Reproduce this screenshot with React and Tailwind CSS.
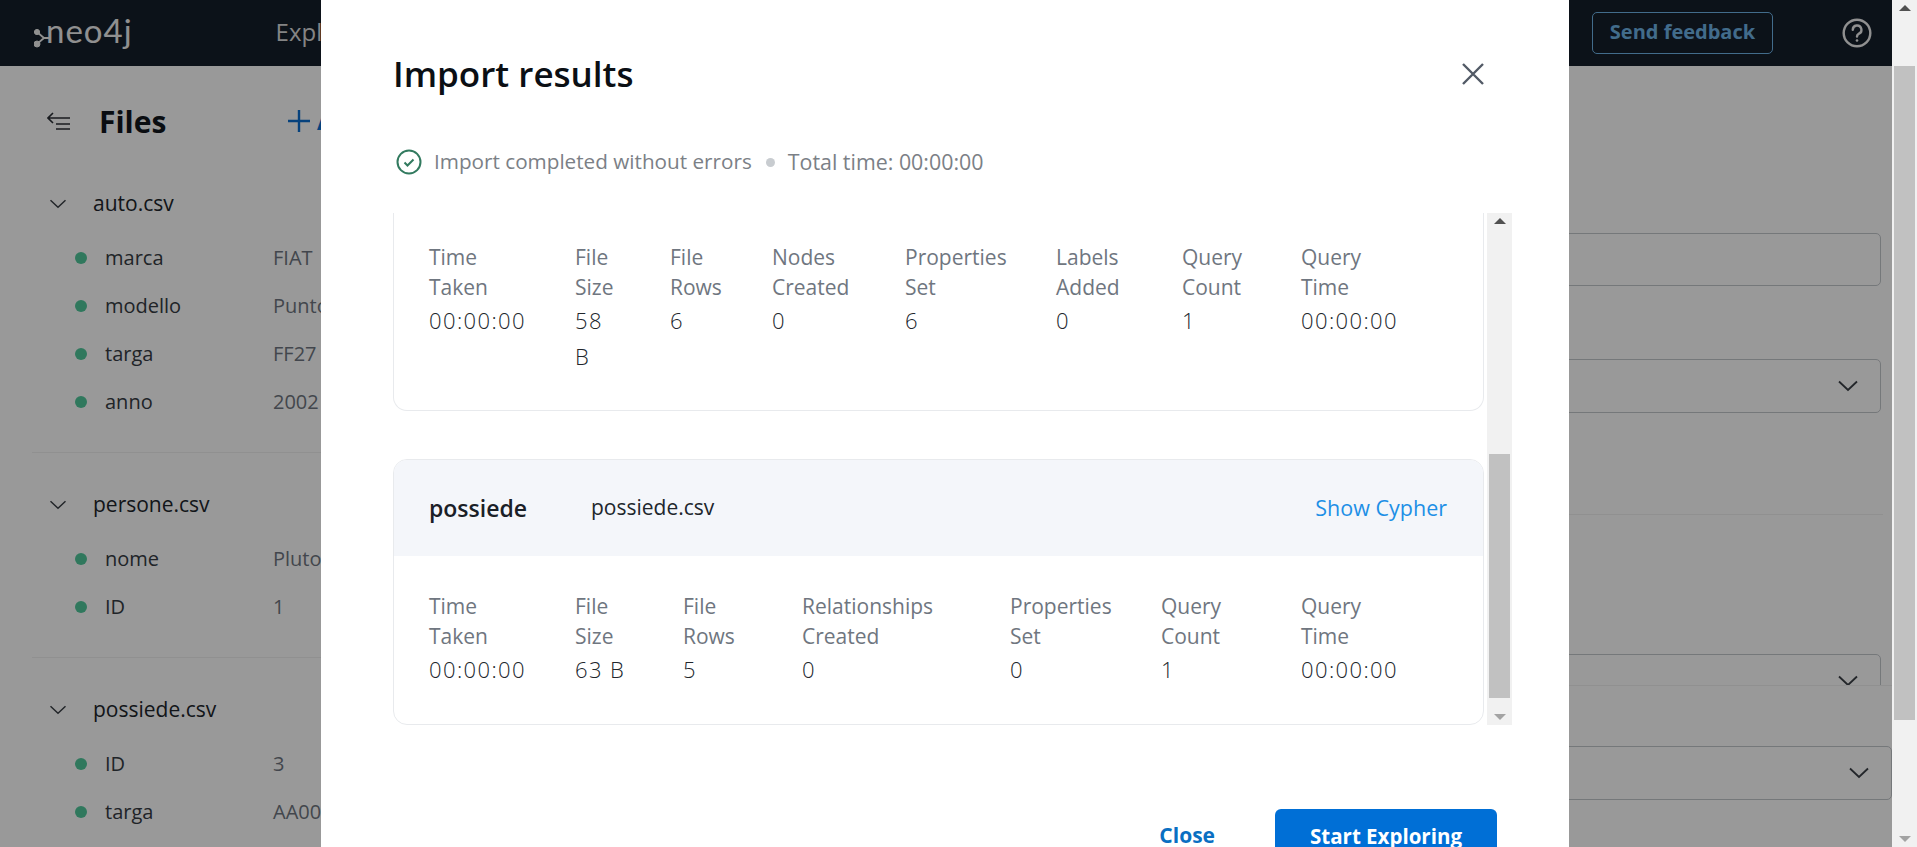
const font = { fontFamily: '"Open Sans", "Noto Sans", sans-serif' };

const groups = [
  {
    file: 'auto.csv',
    rows: [['marca', 'FIAT'], ['modello', 'Punto'], ['targa', 'FF27'], ['anno', '2002']],
  },
  { file: 'persone.csv', rows: [['nome', 'Pluto'], ['ID', '1']] },
  { file: 'possiede.csv', rows: [['ID', '3'], ['targa', 'AA00']], last: true },
];

const nodeStats = [
  ['Time', 'Taken', '00:00:00'],
  ['File', 'Size', '58\nB'],
  ['File', 'Rows', '6'],
  ['Nodes', 'Created', '0'],
  ['Properties', 'Set', '6'],
  ['Labels', 'Added', '0'],
  ['Query', 'Count', '1'],
  ['Query', 'Time', '00:00:00'],
];

const relStats = [
  ['Time', 'Taken', '00:00:00'],
  ['File', 'Size', '63 B'],
  ['File', 'Rows', '5'],
  ['Relationships', 'Created', '0'],
  ['Properties', 'Set', '0'],
  ['Query', 'Count', '1'],
  ['Query', 'Time', '00:00:00'],
];

function Chevron({ className }) {
  return (
    <svg viewBox="0 0 20 12" fill="none" stroke="currentColor" strokeWidth="1.8" className={`shrink-0 ${className}`}>
      <path d="M1 1.5l9 8.5 9-8.5" />
    </svg>
  );
}

function Logo() {
  return (
    <div className="flex items-center">
      <svg viewBox="0 0 16 24" className="shrink-0 w-[16px] h-[24px] mt-[12px] text-[#f0f0f0]" fill="currentColor" stroke="currentColor">
        <circle cx="3" cy="5" r="2.6" />
        <circle cx="3" cy="17" r="3" />
        <path d="M3 5l7 6-7 6M10 11h6" strokeWidth="1.8" fill="none" />
      </svg>
      <span className="text-[33px] leading-none tracking-[1px] text-[#f0f0f0] -mt-[5px] -ml-[4px]" style={{ fontFamily: 'Lato, sans-serif' }}>neo4j</span>
    </div>
  );
}

function StatTable({ stats, columns }) {
  return (
    <div className={`grid ${columns} text-[21px] leading-[30px]`}>
      {stats.map(([a, b, value]) => (
        <div key={a + b}>
          <div className="text-[#6f7680]">{a}</div>
          <div className="text-[#6f7680]">{b}</div>
          <div className="text-[#21262c] text-[22px] font-light tracking-[1.4px] leading-[36px] whitespace-pre-line">{value}</div>
        </div>
      ))}
    </div>
  );
}

function Background() {
  return (
    <div className="absolute inset-0 flex flex-col">
      <header className="h-[66px] shrink-0 bg-[#141e2a] flex items-center pl-[34px] pr-[20px]">
        <Logo />
        <span className="ml-[143px] -mt-[3px] text-[24px] font-medium text-[#dddddd]">Explore</span>
        <button className="ml-auto h-[42px] w-[181px] pb-[3px] rounded-[5px] border border-[#6fb4e8] text-[20px] font-bold text-[#6fb4e8]">Send feedback</button>
        <svg viewBox="0 0 32 32" fill="none" stroke="#f0f0f0" strokeWidth="2.6" className="shrink-0 ml-[69px] w-[30px] h-[30px]">
          <circle cx="16" cy="16" r="14.2" />
          <path d="M11.5 12.5a4.6 4.6 0 1 1 6.6 4.2c-1.4.7-2.1 1.5-2.1 3" strokeLinecap="round" />
          <circle cx="16" cy="24" r="1.4" fill="#f0f0f0" stroke="none" />
        </svg>
      </header>
      <div className="flex-1 bg-white flex min-h-0">
        <aside className="w-[360px] shrink-0 pl-[32px] pt-[32px]">
          <div className="flex items-center h-[46px]">
            <svg viewBox="0 0 24 18" fill="none" stroke="#2b2f36" strokeWidth="1.6" className="shrink-0 ml-[15px] w-[24px] h-[18px]">
              <path d="M1 6H23M6 1L1 6l5 5M9 12H23M9 17H23" />
            </svg>
            <span className="ml-[28px] text-[30px] font-bold text-[#12171d] w-[67px]">Files</span>
            <svg viewBox="0 0 24 24" fill="none" stroke="#0a6fd0" strokeWidth="2.4" className="shrink-0 ml-[121px] w-[24px] h-[24px]">
              <path d="M12 1v22M1 12h22" />
            </svg>
            <span className="ml-[6px] text-[24px] font-bold text-[#0a6fd0]">Add</span>
          </div>
          {groups.map((g, i) => (
            <div key={g.file} className={`${i === 0 ? 'pt-[48px]' : 'pt-[40px]'} ${g.last ? '' : 'pb-[38px] border-b border-[#f0f0f0]'}`}>
              <div className="flex items-center h-[24px] text-[21px] text-[#21262c]">
                <Chevron className="ml-[17px] w-[18px] h-[10px] text-[#3b4047]" />
                <span className="ml-[26px]">{g.file}</span>
              </div>
              <div className="mt-[30px] flex flex-col gap-[24px]">
                {g.rows.map(([name, value]) => (
                  <div key={name} className="flex items-center h-[24px] text-[20px]">
                    <span className="ml-[43px] w-[12px] h-[12px] rounded-full bg-[#51c99c]" />
                    <span className="ml-[18px] w-[168px] text-[#363c44]">{name}</span>
                    <span className="text-[#6f7680]">{value}</span>
                  </div>
                ))}
              </div>
            </div>
          ))}
        </aside>
        <main className="flex-1 relative flex flex-col items-end pr-[11px]">
          <div className="w-[400px] h-[53px] mt-[167px] rounded-[5px] border border-[#c4c8cc]" />
          <div className="w-[400px] h-[54px] mt-[73px] rounded-[5px] border border-[#c4c8cc] flex items-center justify-end pr-[22px]">
            <Chevron className="w-[20px] h-[12px] text-[#3b4047]" />
          </div>
          <div className="w-[322px] h-px mt-[101px] -mr-[2px] bg-[#f0f0f0]" />
          <div className="w-[400px] h-[54px] mt-[139px] rounded-[5px] border border-[#c4c8cc] flex items-center justify-end pr-[22px]">
            <Chevron className="w-[20px] h-[12px] text-[#3b4047]" />
          </div>
          <div className="absolute left-0 right-0 bottom-0 h-[162px] -mr-[11px] bg-white border-t border-[#f0f0f0] flex justify-end pr-[11px] pt-[60px]">
            <div className="w-[400px] h-[54px] rounded-[5px] border border-[#c4c8cc] flex items-center justify-end pr-[22px]">
              <Chevron className="w-[20px] h-[12px] text-[#3b4047]" />
            </div>
          </div>
        </main>
      </div>
    </div>
  );
}

function FakeScrollbar({ className, thumbClass }) {
  return (
    <div className={`bg-[#f1f1f1] flex flex-col items-center ${className}`}>
      <span className="mt-[5px] w-0 h-0 border-x-[6px] border-x-transparent border-b-[6px] border-b-[#505050]" />
      <div className={`w-[21px] bg-[#c1c1c1] ${thumbClass}`} />
      <span className="mt-auto mb-[5px] w-0 h-0 border-x-[6px] border-x-transparent border-t-[6px] border-t-[#a3a3a3]" />
    </div>
  );
}

function Modal() {
  return (
    <div className="absolute left-[321px] top-0 bottom-0 w-[1248px] bg-white pl-[72px] flex flex-col">
      <div className="shrink-0 flex items-center justify-between h-[148px] pr-[84px]">
        <h2 className="text-[35px] font-semibold text-[#0b0f14]">Import results</h2>
        <svg viewBox="0 0 24 24" fill="none" stroke="#525a66" strokeWidth="2.4" className="shrink-0 w-[24px] h-[24px]">
          <path d="M2 2l20 20M22 2L2 22" />
        </svg>
      </div>
      <div className="shrink-0 flex items-center h-[28px] text-[20.7px] text-[#7b8086] ml-[3px]">
        <svg viewBox="0 0 26 26" fill="none" stroke="#327a5f" strokeWidth="2" className="shrink-0 w-[26px] h-[26px]">
          <circle cx="13" cy="13" r="11.5" />
          <path d="M8.5 13.5l3 3 6-6" strokeWidth="2" />
        </svg>
        <span className="ml-[12px]">Import completed without errors</span>
        <span className="ml-[14px] w-[9px] h-[9px] rounded-full bg-[#c8ccd0]" />
        <span className="ml-[13px] text-[21.4px]">Total time: 00:00:00</span>
      </div>
      <div className="shrink-0 mt-[37px] h-[512px] flex w-[1119px]">
        <div className="flex-1 flex flex-col justify-end gap-[48px] overflow-hidden">
          <div className="shrink-0 h-[238px] rounded-b-[14px] border-x border-b border-[#e8eaed] pl-[35px] pt-[69px]">
            <StatTable stats={nodeStats} columns="grid-cols-[146px_95px_102px_133px_151px_126px_119px_1fr]" />
          </div>
          <div className="shrink-0 rounded-[14px] border border-[#e8eaed] overflow-hidden">
            <div className="h-[96px] bg-[#f4f6fa] pl-[35px] pr-[36px] flex items-center text-[21px]">
              <span className="font-semibold text-[23px] text-[#1a2027] w-[162px]">possiede</span>
              <span className="text-[#21262c]">possiede.csv</span>
              <span className="ml-auto text-[21.5px] text-[#1d8fe6]">Show Cypher</span>
            </div>
            <div className="h-[168px] pl-[35px] pt-[35px]">
              <StatTable stats={relStats} columns="grid-cols-[146px_108px_119px_208px_151px_140px_1fr]" />
            </div>
          </div>
        </div>
        <FakeScrollbar className="ml-[3px] w-[25px] shrink-0" thumbClass="h-[244px] mt-[230px]" />
      </div>
      <div className="shrink-0 mt-[84px] flex items-center justify-end pr-[72px]">
        <span className="text-[21px] font-bold text-[#0a6fc2] mr-[60px]">Close</span>
        <button className="w-[222px] h-[54px] rounded-[6px] bg-[#006fd6] text-[20.5px] font-bold text-white">Start Exploring</button>
      </div>
    </div>
  );
}

export default function App() {
  return (
    <div className="h-[847px] w-[1917px] overflow-hidden flex" style={font}>
      <div className="relative w-[1892px] h-full overflow-hidden">
        <Background />
        <div className="absolute inset-0 bg-black/40" />
        <Modal />
      </div>
      <FakeScrollbar className="w-[25px] h-full" thumbClass="h-[654px] mt-[55px]" />
    </div>
  );
}
